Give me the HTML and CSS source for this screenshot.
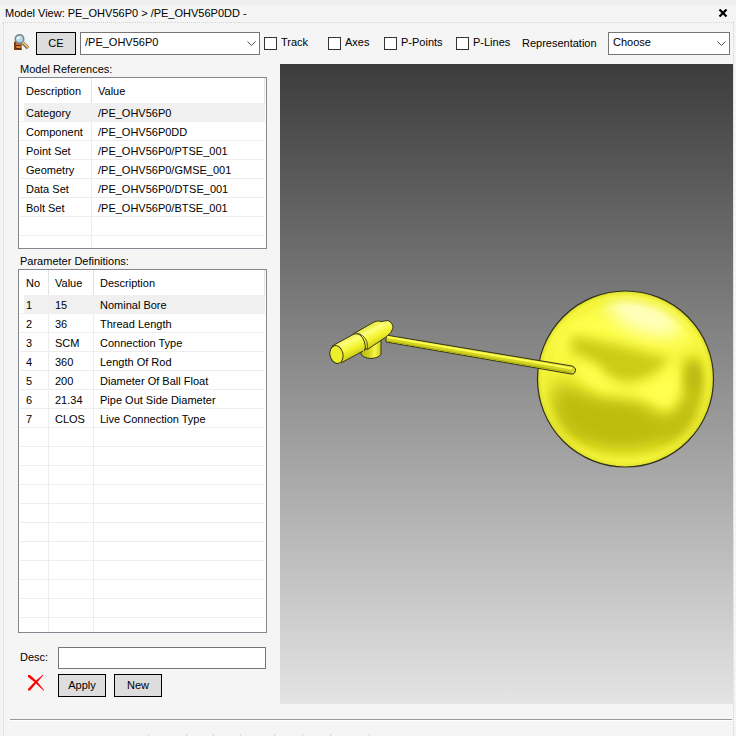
FILE: index.html
```html
<!DOCTYPE html>
<html lang="en">
<head>
<meta charset="utf-8">
<title>Model View</title>
<link rel="stylesheet" href="styles.css">
</head>
<body>
<header class="titlebar">
  <h1>Model View: PE_OHV56P0 &gt; /PE_OHV56P0DD -</h1>
  <button class="close" type="button" aria-label="Close">
    <svg width="10" height="8" viewBox="0 0 10 8"><path d="M1.5 .5 8.5 7.5M8.5 .5 1.5 7.5" stroke="#000" stroke-width="2.2"/></svg>
  </button>
</header>
<main class="panel">
  <form class="toolbar">
    <button class="find" type="button" aria-label="Find element">
      <svg width="18" height="18" viewBox="0 0 18 18">
        <path d="M1 8 3 6H9V16H1Z" fill="#c8702c"/>
        <path d="M1 8H3V16H1ZM3 15H9V16H3Z" fill="#7c3c14"/>
        <path d="M3 11.500H8M3 14.500H8" stroke="#5e2e12"/>
        <path d="M4 13H7" stroke="#f0a050"/>
        <path d="M10 9 15 14" stroke="#6b5536" stroke-width="3.400"/>
        <path d="M10 8.500 15 13.500" stroke="#efc675" stroke-width="1.800"/>
        <circle cx="6.500" cy="5" r="4.300" fill="#b5d5df" stroke="#71858c" stroke-width="1.400"/>
        <path d="M3.500 5.500Q4 2 8 2.500Q7 5.500 3.500 5.500Z" fill="#f4fcff"/>
      </svg>
    </button>
    <button class="btn ce" type="button">CE</button>
    <span class="combo element">
      <select aria-label="Element"><option>/PE_OHV56P0</option></select>
      <svg width="9" height="6" viewBox="0 0 9 6"><path d="M.5 .5 4.500 4.500 8.500 .5"/></svg>
    </span>
    <div class="checks">
      <label><input type="checkbox">Track</label>
      <label><input type="checkbox">Axes</label>
      <label><input type="checkbox">P-Points</label>
      <label><input type="checkbox">P-Lines</label>
    </div>
    <label class="rep" for="rep">Representation</label>
    <span class="combo choose">
      <select id="rep"><option>Choose</option></select>
      <svg width="9" height="6" viewBox="0 0 9 6"><path d="M.5 .5 4.500 4.500 8.500 .5"/></svg>
    </span>
  </form>
  <div class="work">
    <section class="side">
      <h2>Model References:</h2>
      <div class="list">
        <table class="refs">
          <colgroup><col class="c-name"><col></colgroup>
          <thead><tr><th>Description</th><th>Value</th></tr></thead>
          <tbody>
            <tr class="on"><td>Category</td><td>/PE_OHV56P0</td></tr>
            <tr><td>Component</td><td>/PE_OHV56P0DD</td></tr>
            <tr><td>Point Set</td><td>/PE_OHV56P0/PTSE_001</td></tr>
            <tr><td>Geometry</td><td>/PE_OHV56P0/GMSE_001</td></tr>
            <tr><td>Data Set</td><td>/PE_OHV56P0/DTSE_001</td></tr>
            <tr><td>Bolt Set</td><td>/PE_OHV56P0/BTSE_001</td></tr>
            <tr><td></td><td></td></tr>
            <tr class="end"><td></td><td></td></tr>
          </tbody>
        </table>
      </div>
      <h2 class="second">Parameter Definitions:</h2>
      <div class="list">
        <table class="params">
          <colgroup><col class="c-no"><col class="c-val"><col></colgroup>
          <thead><tr><th>No</th><th>Value</th><th>Description</th></tr></thead>
          <tbody>
            <tr class="on"><td>1</td><td>15</td><td>Nominal Bore</td></tr>
            <tr><td>2</td><td>36</td><td>Thread Length</td></tr>
            <tr><td>3</td><td>SCM</td><td>Connection Type</td></tr>
            <tr><td>4</td><td>360</td><td>Length Of Rod</td></tr>
            <tr><td>5</td><td>200</td><td>Diameter Of Ball Float</td></tr>
            <tr><td>6</td><td>21.34</td><td>Pipe Out Side Diameter</td></tr>
            <tr><td>7</td><td>CLOS</td><td>Live Connection Type</td></tr>
            <tr><td></td><td></td><td></td></tr>
            <tr><td></td><td></td><td></td></tr>
            <tr><td></td><td></td><td></td></tr>
            <tr><td></td><td></td><td></td></tr>
            <tr><td></td><td></td><td></td></tr>
            <tr><td></td><td></td><td></td></tr>
            <tr><td></td><td></td><td></td></tr>
            <tr><td></td><td></td><td></td></tr>
            <tr><td></td><td></td><td></td></tr>
            <tr><td></td><td></td><td></td></tr>
            <tr class="end"><td></td><td></td><td></td></tr>
          </tbody>
        </table>
      </div>
      <form class="edit">
        <label for="desc">Desc:</label>
        <input id="desc" type="text">
        <button class="delete" type="button" aria-label="Delete">
          <svg width="16" height="16" viewBox="0 0 16 16"><path d="M0 0H2L8 5.500 14.500 0H15.500L9.500 7 16 15V16L8 8.500 2 15.500H0V14L6.500 7 0 2Z" fill="#f00"/></svg>
        </button>
        <div class="actions">
          <button class="btn" type="button">Apply</button>
          <button class="btn" type="button">New</button>
        </div>
      </form>
    </section>
    <section class="view" aria-label="Model">
      <svg viewBox="280 64 453 640" role="img" aria-label="Ball float valve">
        <defs>
          <clipPath id="ball"><circle cx="625.500" cy="379" r="88"/></clipPath>
          <radialGradient id="rim"><stop offset=".84" stop-color="#e8e82e" stop-opacity="0"/><stop offset=".94" stop-color="#f4f43a" stop-opacity=".6"/><stop offset="1" stop-color="#dcdc28"/></radialGradient>
          <linearGradient id="base" x1="0" y1="0" x2="0" y2="1"><stop offset="0" stop-color="#f2f236"/><stop offset=".2" stop-color="#ffff4c"/><stop offset=".55" stop-color="#f2f238"/><stop offset=".8" stop-color="#d0d016"/><stop offset="1" stop-color="#ffff45"/></linearGradient>
          <linearGradient id="tube" gradientUnits="userSpaceOnUse" x1="353" y1="330" x2="364" y2="352"><stop offset="0" stop-color="#d8d824"/><stop offset=".35" stop-color="#ffff78"/><stop offset=".65" stop-color="#f4f430"/><stop offset="1" stop-color="#c8c814"/></linearGradient>
          <linearGradient id="outlet" x1="0" y1="0" x2="1" y2="0"><stop offset="0" stop-color="#b8b810"/><stop offset=".4" stop-color="#d2d21c"/><stop offset=".7" stop-color="#f8f84a"/><stop offset="1" stop-color="#c8c818"/></linearGradient>
          <filter id="soft" x="-60%" y="-80%" width="220%" height="260%"><feGaussianBlur stdDeviation="9"/></filter>
          <filter id="fine" x="-60%" y="-60%" width="220%" height="220%"><feGaussianBlur stdDeviation="6"/></filter>
        </defs>
        <g clip-path="url(#ball)">
          <rect x="537" y="291" width="177" height="177" fill="url(#base)"/>
          <ellipse cx="644" cy="316" rx="40" ry="16" transform="rotate(20 644 316)" fill="#ffffc4" filter="url(#soft)"/>
          <path d="M571 335Q604 341 640 351Q660 357 670 359L655 374Q635 385 619 381Q606 378 601 368L572 352Z" fill="#cccc18" filter="url(#fine)"/>
          <path d="M556 380Q579 390 603 399Q645 396 660 420L681 404L686 365Q698 345 704 374Q706 411 690 431Q658 443 625 449Q587 447 558 423Q549 398 556 380Z" fill="#bcbc0a" filter="url(#soft)"/>
          <path d="M580 362Q594 364 606 380L628 389L647 383Q665 376 674 362Q684 371 679 397L669 412Q656 406 643 398L602 392Q582 382 576 371Z" fill="#ffff50" filter="url(#fine)"/>
          <path d="M687 366Q694 356 700 367Q702 385 693 396Q686 387 687 366Z" fill="#b6b608" filter="url(#fine)"/>
          <circle cx="625.500" cy="379" r="88" fill="url(#rim)"/>
        </g>
        <circle cx="625.500" cy="379" r="88" fill="none" stroke="#30301c" stroke-width="1.200"/>
        <path d="M386 335 572 366Q577 368 575 372Q574 375 571 374L386 342Z" fill="#d4d422" stroke="#36361c"/>
        <path d="M387 337 572 368.500" stroke="#ffff54" stroke-width="2" fill="none"/>
        <path d="M387 341 571 372.500" stroke="#a8a812" fill="none"/>
        <path d="M361 342V354Q363 358 371 358.500Q379 358 381 354V338Z" fill="url(#outlet)" stroke="#36361c"/>
        <path d="M353 334 374 322Q378 320 381 321.500L388 320.500Q393 323 393 328Q392 333 386 337L368 349Q361 350 354 343Z" fill="url(#tube)" stroke="#36361c"/>
        <path d="M332 346 354 334Q360 333 363 339Q366 347 363 351L341 363Z" fill="url(#tube)"/>
        <path d="M332 346 354 334M341 363 363 351M354 334Q361 332 364.500 342Q366.500 350 364 351" stroke="#36361c" fill="none"/>
        <path d="M356 333Q364 334 367 342Q368 347 367 350" stroke="#58581c" fill="none"/>
        <ellipse cx="336.500" cy="354.500" rx="6.500" ry="9" transform="rotate(-14 336.500 354.500)" fill="#eeee2b" stroke="#36361c"/>
      </svg>
    </section>
  </div>
  <footer class="status"><i></i><i></i><i></i><i></i><i></i><i></i><i></i><i></i></footer>
</main>
</body>
</html>
```
FILE: styles.css
```css
* { box-sizing: border-box; }
body {
  margin: 0;
  min-height: 100vh;
  display: flex;
  flex-direction: column;
  border-top: 5px solid #efefef;
  background: #f5f5f5;
  color: #000;
  font: 11px/14px "Liberation Sans", Arial, sans-serif;
}
button, input, select { font: inherit; color: inherit; }
button { padding: 0; border: 0; background: none; }
svg { display: block; }
h1, h2 { margin: 0; font: inherit; }

.titlebar {
  height: 17px;
  display: flex;
  align-items: center;
  justify-content: space-between;
  padding: 0 8px 2px 5px;
}
.panel {
  flex: 1;
  display: flex;
  flex-direction: column;
  margin: 0 2px 0 3px;
  border: 1px dotted #d2d2d2;
  border-bottom: 0;
}

.toolbar {
  height: 41px;
  display: flex;
  align-items: flex-start;
  padding: 9px 3px 0 9px;
}
.find { width: 23px; padding: 2px 0; }
.btn {
  width: 48px;
  height: 23px;
  padding-bottom: 2px;
  border: 1px solid #000;
  background: #dddddd;
}
.ce { width: 40px; }
.combo { position: relative; }
.combo select {
  display: block;
  width: 100%;
  height: 23px;
  padding: 0 20px 3px 4px;
  border: 1px solid #767676;
  border-radius: 0;
  background: #fff;
  appearance: none;
}
.combo svg {
  position: absolute;
  right: 4px;
  top: 9px;
  fill: none;
  stroke: #505050;
  pointer-events: none;
}
.element { width: 180px; margin: 0 4px; }
.checks {
  display: grid;
  grid-template-columns: 64px 56px 72px 66px;
}
.checks label {
  display: flex;
  gap: 4px;
  line-height: 20px;
}
.checks input {
  width: 13px;
  height: 13px;
  margin: 5px 0 0;
  border: 1px solid #333;
  background: #fff;
  appearance: none;
}
.rep { line-height: 22px; }
.choose { width: 122px; margin-left: auto; }

.work { display: flex; gap: 13px; }
.side { width: 263px; padding-left: 14px; }
h2 { height: 13px; padding-left: 2px; line-height: 10px; }
h2.second { height: 20px; line-height: 24px; }
.list { padding: 0 1px; border: 1px solid #828790; background: #fff; }
table {
  width: 100%;
  table-layout: fixed;
  border-collapse: separate;
  border-spacing: 0;
}
.c-name { width: 72px; }
.c-no { width: 29px; }
.c-val { width: 45px; }
th, td {
  padding: 0 0 0 6px;
  border-right: 1px solid #ededed;
  font-weight: normal;
  text-align: left;
  white-space: nowrap;
}
th { height: 25px; border-color: #e2e2e2; }
td { height: 19px; padding-top: 2px; border-bottom: 1px solid #ededed; line-height: 16px; }
td:last-child { border-right: 0; }
.on td { border-color: #f0f0f0; background: #f0f0f0; }
.on td:first-child { background: linear-gradient(to right, #fff 4px, #f0f0f0 4px); }
.end td { height: 12px; border-bottom: 0; }
.params .end td { height: 14px; }

.edit {
  display: grid;
  grid-template-columns: 38px 1fr;
  row-gap: 5px;
  padding: 14px 1px 7px 2px;
}
.edit input {
  width: 100%;
  height: 22px;
  border: 1px solid #767676;
  background: #fff;
}
.edit label { line-height: 20px; }
.delete { height: 20px; padding: 0 0 2px 8px; }
.actions { display: flex; gap: 8px; }

.view {
  flex: 1;
  min-width: 0;
  background: linear-gradient(#3c3c3c, #e4e4e4);
}
.view svg { width: 100%; height: auto; }

.status {
  flex: 1;
  display: grid;
  grid-template-columns: 139px 38px 27px 27px 34px 28px 28px 39px;
  align-items: end;
  margin: 15px 1px 0 6px;
  border-top: 1px solid #999;
  box-shadow: inset 0 1px #fff;
}
.status i { height: 2px; border-right: 1px solid #d8d8d8; }
```
